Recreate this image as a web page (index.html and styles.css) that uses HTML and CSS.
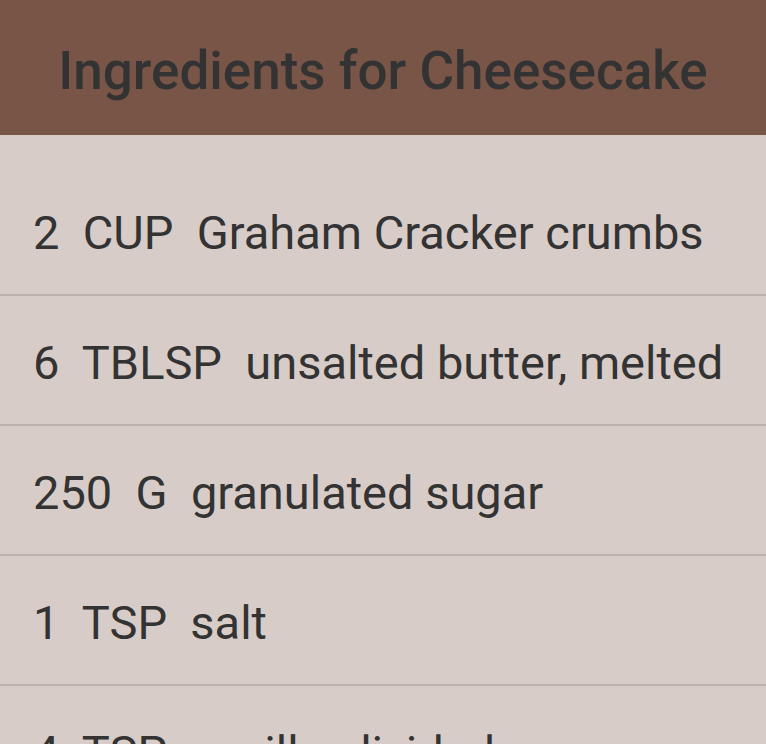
FILE: index.html
```html
<!DOCTYPE html>
<html lang="en">
<head>
<meta charset="utf-8">
<title>Ingredients for Cheesecake</title>
<link rel="stylesheet" href="styles.css">
</head>
<body>
<header class="app-bar">
  <h1 class="title">Ingredients for Cheesecake</h1>
</header>
<main class="list">
  <div class="row">2  CUP  Graham Cracker crumbs</div>
  <div class="row">6  TBLSP  unsalted butter, melted</div>
  <div class="row">250  G  granulated sugar</div>
  <div class="row">1  TSP  salt</div>
  <div class="row">4  TSP  vanilla, divided</div>
</main>
</body>
</html>
```
FILE: styles.css
```css
html, body {
  margin: 0;
  padding: 0;
}
body {
  background: #d7ccc8;
  font-family: Roboto, "Noto Sans", "Liberation Sans", sans-serif;
  color: #333333;
  overflow: hidden;
}
.app-bar {
  background: #795548;
  height: 135px;
  display: flex;
  align-items: center;
  justify-content: center;
}
.title {
  margin: 0;
  font-size: 53px;
  font-weight: 500;
  line-height: 62px;
  color: #333333;
  padding-top: 6px;
}
.list {
  padding-top: 31px;
}
.row {
  white-space: pre;
  font-size: 47px;
  line-height: 56px;
  height: 56px;
  padding: 39px 0 33px 33px;
  border-bottom: 2px solid #bdb1ad;
}
```
